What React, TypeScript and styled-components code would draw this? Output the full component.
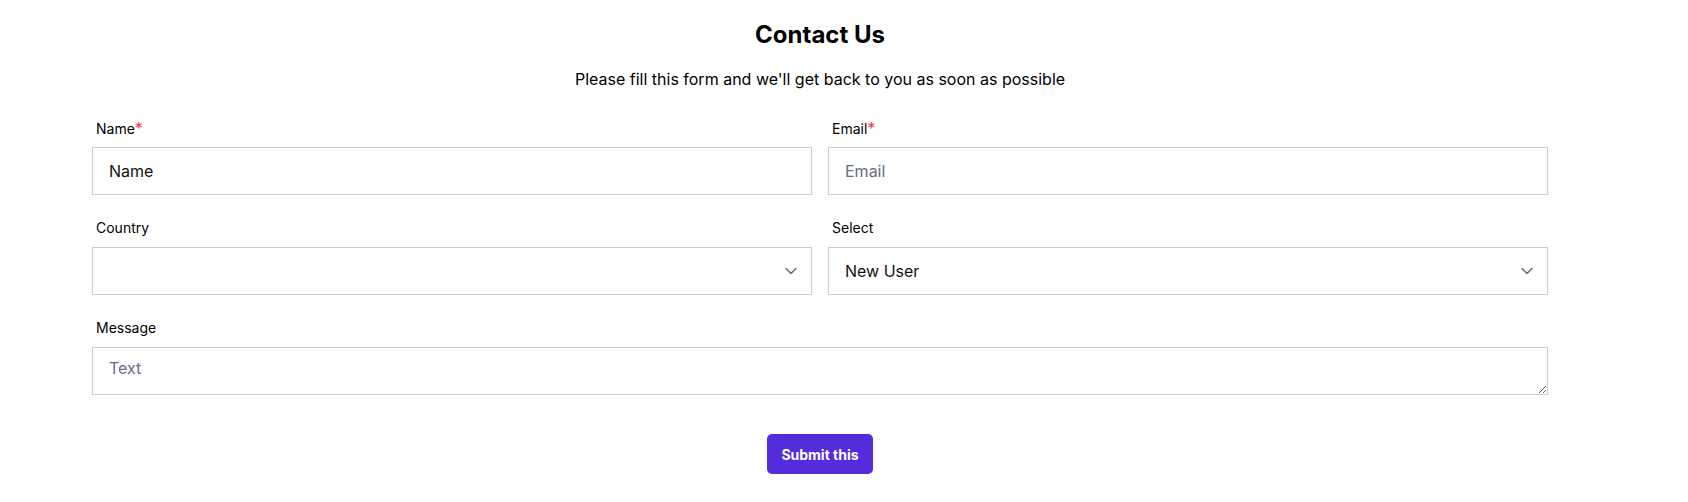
import React from 'react';
import styled, { createGlobalStyle } from 'styled-components';
import { ChevronDown } from 'lucide-react';

const GlobalStyle = createGlobalStyle`
    html, body {
        margin: 0;
        padding: 0;
        background: #ffffff;
        font-family: Inter, "Liberation Sans", sans-serif;
        color: #111111;
    }
    * {
        box-sizing: border-box;
    }
`;

export default function App() {
    return (
        <>
            <GlobalStyle />
            <Page>
                <Title>Contact Us</Title>
                <Subtitle>Please fill this form and we'll get back to you as soon as possible</Subtitle>
                <Form onSubmit={(e) => e.preventDefault()}>
                    <Grid>
                        <Field>
                            <Label>Name<Required>*</Required></Label>
                            <Input type='text' defaultValue='Name' />
                        </Field>
                        <Field>
                            <Label>Email<Required>*</Required></Label>
                            <Input type='email' placeholder='Email' />
                        </Field>
                        <Field>
                            <Label>Country</Label>
                            <SelectWrap>
                                <Select defaultValue=''>
                                    <option value=''></option>
                                    <option value='us'>United States</option>
                                </Select>
                                <Chevron size={20} strokeWidth={1.8} />
                            </SelectWrap>
                        </Field>
                        <Field>
                            <Label>Select</Label>
                            <SelectWrap>
                                <Select defaultValue='new'>
                                    <option value='new'>New User</option>
                                    <option value='existing'>Existing User</option>
                                </Select>
                                <Chevron size={20} strokeWidth={1.8} />
                            </SelectWrap>
                        </Field>
                        <Field $wide>
                            <Label>Message</Label>
                            <TextArea rows={1} placeholder='Text' />
                        </Field>
                    </Grid>
                    <Actions>
                        <SubmitButton type='submit'>Submit this</SubmitButton>
                    </Actions>
                </Form>
            </Page>
        </>
    );
}

const Page = styled.div`
    width: 1456px;
    margin-left: 92px;
    padding-top: 19px;
`;

const Title = styled.h1`
    margin: 0;
    font-size: 24px;
    line-height: 32px;
    font-weight: 700;
    text-align: center;
    color: #000000;
`;

const Subtitle = styled.p`
    margin: 16px 0 0;
    font-size: 16px;
    line-height: 24px;
    text-align: center;
    color: #000000;
`;

const Form = styled.form`
    margin-top: 27px;
`;

const Grid = styled.div`
    display: grid;
    grid-template-columns: 1fr 1fr;
    column-gap: 16px;
    row-gap: 23px;
`;

const Field = styled.div<{ $wide?: boolean }>`
    display: flex;
    flex-direction: column;
    grid-column: ${(p) => (p.$wide ? '1 / -1' : 'auto')};
`;

const Label = styled.label`
    height: 20px;
    font-size: 14px;
    line-height: 20px;
    padding-left: 4px;
    margin-bottom: 9px;
    color: #000000;
`;

const Required = styled.span`
    color: #e53e3e;
    font-size: 16px;
`;

const fieldBase = `
    width: 100%;
    height: 48px;
    border: 1px solid #cbcbd4;
    border-radius: 0;
    background: #ffffff;
    padding: 0 16px;
    font-family: Inter, "Liberation Sans", sans-serif;
    font-size: 16px;
    color: #111111;
    outline: none;
    &::placeholder {
        color: #6b6b80;
    }
`;

const Input = styled.input`
    ${fieldBase}
`;

const SelectWrap = styled.div`
    position: relative;
`;

const Select = styled.select`
    ${fieldBase}
    appearance: none;
    -webkit-appearance: none;
`;

const Chevron = styled(ChevronDown)`
    position: absolute;
    right: 11px;
    top: 50%;
    transform: translateY(-50%);
    color: #6b6b80;
    pointer-events: none;
`;

const TextArea = styled.textarea`
    ${fieldBase}
    display: block;
    padding: 8px 16px;
    line-height: 24px;
    resize: vertical;
`;

const Actions = styled.div`
    display: flex;
    justify-content: center;
    margin-top: 39px;
`;

const SubmitButton = styled.button`
    height: 40px;
    padding: 0 14px;
    border: none;
    border-radius: 5px;
    background: #542cdb;
    color: #ffffff;
    font-family: Inter, "Liberation Sans", sans-serif;
    font-size: 14px;
    font-weight: 700;
    cursor: pointer;
`;
